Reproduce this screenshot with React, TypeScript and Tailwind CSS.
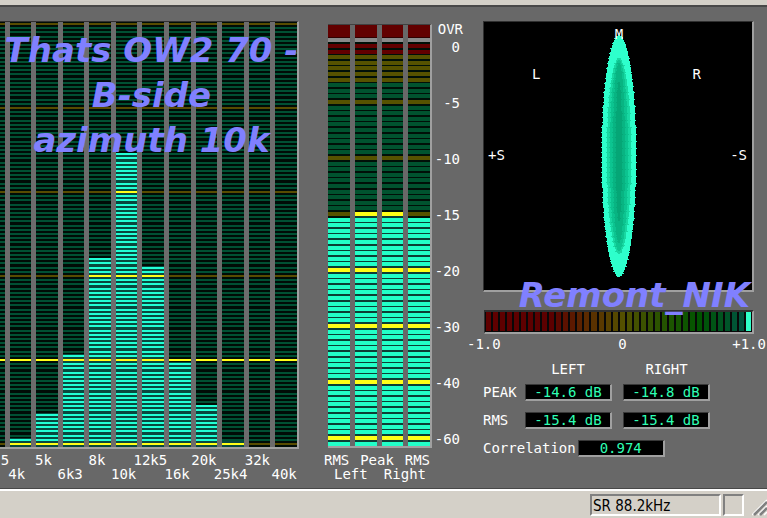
import React from 'react';

const bands = [
  { label: '5', top: 448 },
  { label: '4k', top: 438 },
  { label: '5k', top: 413 },
  { label: '6k3', top: 354 },
  { label: '8k', top: 258 },
  { label: '10k', top: 153 },
  { label: '12k5', top: 266 },
  { label: '16k', top: 362 },
  { label: '20k', top: 405 },
  { label: '25k4', top: 441 },
  { label: '32k', top: 448 },
  { label: '40k', top: 448 },
];

const meters = [
  { name: 'RMS left', first: 31 },
  { name: 'Peak left', first: 30 },
  { name: 'Peak right', first: 30 },
  { name: 'RMS right', first: 31 },
];

const scale = ['0', '-5', '-10', '-15', '-20', '-30', '-40', '-60'];

const TITLE = "font-['DejaVu_Sans',sans-serif] text-[34px] leading-[45px] font-bold italic text-[#8080ff]";

// One third-octave band, 101 thin segments with a yellow mark every 20
function BandBar({ top }: { top: number }) {
  const segments = Array.from({ length: 101 }, (_, i) => {
    const y = Math.round(1 + i * 4.2);
    // the reference line at segment 80 is always on
    const lit = y + 22 >= top || i === 80;
    const mark = i % 20 === 0;
    const fill = mark ? (lit ? '#ffff18' : '#574c00') : lit ? '#22ffd5' : '#005033';
    return <rect key={i} x="0" y={y} width="100%" height="2" fill={fill} />;
  });
  return (
    <svg className="h-[425px] min-w-0 flex-1 bg-[#000c06]" shapeRendering="crispEdges">
      <rect x="0" y={top - 22} width="100%" height="430" fill="#08483e" />
      {segments}
    </svg>
  );
}

function MeterBar({ first }: { first: number }) {
  const segments = Array.from({ length: 72 }, (_, i) => {
    const lit = i >= first;
    let fill = lit ? '#22ffc8' : '#00532f';
    if (i < 2) fill = '#620000';
    else if (i < 7) fill = '#565200';
    else if (i % 10 === 0) fill = lit ? '#ffff18' : '#565200';
    return <rect key={i} x="0" y={Math.round(2 + i * 5.6)} width="100%" height="4" fill={fill} />;
  });
  const litTop = 2 + first * 5.6;
  return (
    <svg className="h-[404px] w-full bg-[#001008]" shapeRendering="crispEdges">
      <rect x="0" y={Math.round(litTop)} width="100%" height="400" fill="#0b3f35" />
      {segments}
    </svg>
  );
}

function Spectrum() {
  return (
    <section className="relative min-w-0 flex-1">
      <div className="overflow-hidden pt-[14px]">
        <div className="border-t border-r-2 border-b-2 border-t-[#303030] border-r-[#a0a0a0] border-b-[#a0a0a0]">
          <div className="-ml-[17px] flex gap-[5px] bg-[#6c6c6c]">
            {bands.map((band) => (
              <BandBar key={band.label} top={band.top} />
            ))}
          </div>
        </div>
        <div className="mr-1 -ml-[21px] flex gap-[5px] pt-1 leading-[14px]">
          {bands.map((band, i) =>
            i === 0 ? (
              <div key={band.label} className="flex flex-1 basis-0 justify-end">
                <span className="w-0">{band.label}</span>
              </div>
            ) : (
              <div
                key={band.label}
                className={i % 2 ? 'flex flex-1 basis-0 justify-center pt-[14px]' : 'flex flex-1 basis-0 justify-center'}
              >
                <span className="flex w-0 justify-center whitespace-nowrap">{band.label}</span>
              </div>
            ),
          )}
        </div>
      </div>
      <h1 className={`${TITLE} absolute inset-x-0 top-[21px] pl-1 text-center whitespace-nowrap`}>
        Thats OW2 70 -<br />
        B-side
        <br />
        azimuth 10k
      </h1>
    </section>
  );
}

function LevelMeters() {
  return (
    <section className="ml-[29px] w-[104px] shrink-0 pt-[17px]">
      <div className="flex gap-[5px] border-t border-r-2 border-b-2 border-t-[#404040] border-r-[#a0a0a0] border-b-[#a0a0a0]">
        {meters.map((meter) => (
          <div key={meter.name} className="flex flex-1 flex-col" aria-label={meter.name}>
            <div className="h-[13px] border-b border-[#300000] bg-[#620000]" />
            <div className="h-1 bg-[#8a8a8a]" />
            <MeterBar first={meter.first} />
          </div>
        ))}
      </div>
      <div className="mr-[2px] -ml-1 flex justify-between pt-[5px] leading-[14px]">
        <span>RMS</span>
        <span>Peak</span>
        <span>RMS</span>
      </div>
      <div className="flex justify-between px-[6px] leading-[14px]">
        <span>Left</span>
        <span>Right</span>
      </div>
    </section>
  );
}

function Scale() {
  return (
    <section className="w-[31px] shrink-0 pt-[13px] text-right">
      <div className="h-[18px] leading-[18px]">OVR</div>
      {scale.map((value) => (
        <div key={value} className="h-14 pr-[3px] leading-[18px]">
          {value}
        </div>
      ))}
    </section>
  );
}

// Stack of one-pixel rows, slightly ragged at the edges
function lobe(top: number, bottom: number, half: number, ragged: number) {
  const mid = (top + bottom) / 2;
  const reach = (bottom - top) / 2;
  let d = '';
  for (let y = top; y < bottom; y++) {
    const t = Math.abs(y + 0.5 - mid) / reach;
    const w = half * Math.pow(1 - Math.pow(t, 2.1), 0.52);
    const left = Math.round(w + ((y * 7) % 5 === 0 ? ragged : 0));
    const right = Math.round(w + ((y * 11) % 7 === 0 ? ragged : 0));
    d += `M${136 - left} ${y}h${left + right}v1h-${left + right}z`;
  }
  return d;
}

function VectorScope() {
  return (
    <div className="relative h-[271px] border-t border-r-2 border-b-2 border-l border-t-[#303030] border-r-[#a0a0a0] border-b-[#a0a0a0] border-l-[#303030] bg-black">
      <svg viewBox="0 0 270 268" className="mx-auto h-[268px] w-[270px] max-w-full" shapeRendering="crispEdges">
        <path d={lobe(12, 256, 17, 1)} fill="#2effcc" />
        <path d={lobe(35, 233, 12, 1)} fill="#18d8a2" />
        <path d={lobe(37, 230, 9, 1)} fill="#0cc490" />
        <path d={lobe(40, 222, 6, 1)} fill="#08b482" />
        <path d={lobe(58, 200, 3, 1)} fill="#05a676" />
      </svg>
      <span className="absolute inset-x-0 top-[3px] pl-[2px] text-center leading-[18px]">M</span>
      <span className="absolute top-[43px] left-12 leading-[18px]">L</span>
      <span className="absolute top-[43px] right-[51px] leading-[18px]">R</span>
      <span className="absolute top-[124px] left-1 leading-[18px]">+S</span>
      <span className="absolute top-[124px] right-[5px] leading-[18px]">-S</span>
    </div>
  );
}

function cellColor(i: number) {
  if (i === 37) return '#30ffc8';
  const stops = [
    [0, 96, 0, 0],
    [9, 92, 0, 0],
    [14, 92, 42, 0],
    [19, 84, 80, 0],
    [26, 28, 84, 0],
    [30, 0, 84, 0],
    [36, 0, 84, 62],
  ];
  const n = stops.findIndex((s) => s[0] >= i) || 1;
  const a = stops[n - 1];
  const b = stops[n];
  const t = (i - a[0]) / (b[0] - a[0]);
  const mix = [1, 2, 3].map((c) => Math.round(a[c] + (b[c] - a[c]) * t));
  return `rgb(${mix.join(',')})`;
}

function CorrelationBar() {
  return (
    <div className="mt-[18px]">
      <div className="ml-px flex h-[24px] gap-[2px] border-t-2 border-r-2 border-b-2 border-l border-t-[#303030] border-r-[#a0a0a0] border-b-[#a0a0a0] border-l-[#303030] bg-[#080808] px-px pb-px">
        {Array.from({ length: 38 }, (_, i) => (
          <div key={i} className="flex-1" style={{ backgroundColor: cellColor(i) }} />
        ))}
      </div>
      <div className="-mr-3 -ml-4 grid grid-cols-3 pt-px leading-[18px]">
        <span>-1.0</span>
        <span className="pl-3 text-center">0</span>
        <span className="text-right">+1.0</span>
      </div>
    </div>
  );
}

function Readout({ id, children }: { id?: string; children: React.ReactNode }) {
  return (
    <output
      id={id}
      className="block h-[17px] w-[87px] border-t border-r-2 border-b-2 border-l border-t-[#383838] border-r-[#a0a0a0] border-b-[#a0a0a0] border-l-[#383838] bg-black text-center leading-[15px] text-[#2effb4]"
    >
      {children}
    </output>
  );
}

function Readings() {
  return (
    <div className="pt-[7px]">
      <table className="border-collapse text-left">
        <thead>
          <tr className="leading-[18px]">
            <td className="w-[42px]" />
            <th className="w-[98px] pr-3 text-center font-normal">LEFT</th>
            <th className="w-[87px] text-center font-normal">RIGHT</th>
          </tr>
        </thead>
        <tbody>
          <tr className="h-7">
            <th className="font-normal">PEAK</th>
            <td>
              <Readout>-14.6 dB</Readout>
            </td>
            <td>
              <Readout>-14.8 dB</Readout>
            </td>
          </tr>
          <tr className="h-7">
            <th className="font-normal">RMS</th>
            <td>
              <Readout>-15.4 dB</Readout>
            </td>
            <td>
              <Readout>-15.4 dB</Readout>
            </td>
          </tr>
        </tbody>
      </table>
      <div className="flex h-7 items-center gap-[2px]">
        <label htmlFor="correlation">Correlation</label>
        <Readout id="correlation">0.974</Readout>
      </div>
    </div>
  );
}

function StatusBar() {
  return (
    <footer className="flex min-h-[28px] flex-1 items-start justify-end border-t-2 border-white bg-[#d4d0c8] pt-[3px] text-black">
      <div className="h-[22px] w-[131px] border-2 border-t-[#808080] border-r-white border-b-white border-l-[#808080] pl-px font-['DejaVu_Sans_Condensed','DejaVu_Sans',sans-serif] text-[15px] leading-[20px]">
        SR 88.2kHz
      </div>
      <div className="ml-[2px] h-[22px] w-[21px] border-2 border-t-[#808080] border-r-white border-b-white border-l-[#808080]" />
      <svg className="ml-2 h-[24px] w-[15px]" viewBox="0 0 15 24" fill="none">
        <path d="M0 21L15 6M6 21L15 12M12 21L15 18" stroke="#fff" strokeWidth="1.5" />
        <path d="M2 21L15 8M8 21L15 14" stroke="#808080" strokeWidth="2.5" />
      </svg>
    </footer>
  );
}

export default function App() {
  return (
    <div className="flex min-h-screen flex-col overflow-hidden bg-[#686868] font-['DejaVu_Sans_Mono',monospace] text-[14px] text-white">
      <div className="h-[7px] shrink-0 border-b-2 border-[#484848] bg-[#d4d0c8]" />
      <main className="flex shrink-0 border-b border-[#484848] pr-[13px] pb-[2px]">
        <Spectrum />
        <LevelMeters />
        <Scale />
        <section className="relative ml-5 w-[271px] shrink-0 pt-[14px]">
          <VectorScope />
          <CorrelationBar />
          <Readings />
          <div className={`${TITLE} absolute top-[266px] right-1 whitespace-nowrap`}>Remont_NIK</div>
        </section>
      </main>
      <StatusBar />
    </div>
  );
}
